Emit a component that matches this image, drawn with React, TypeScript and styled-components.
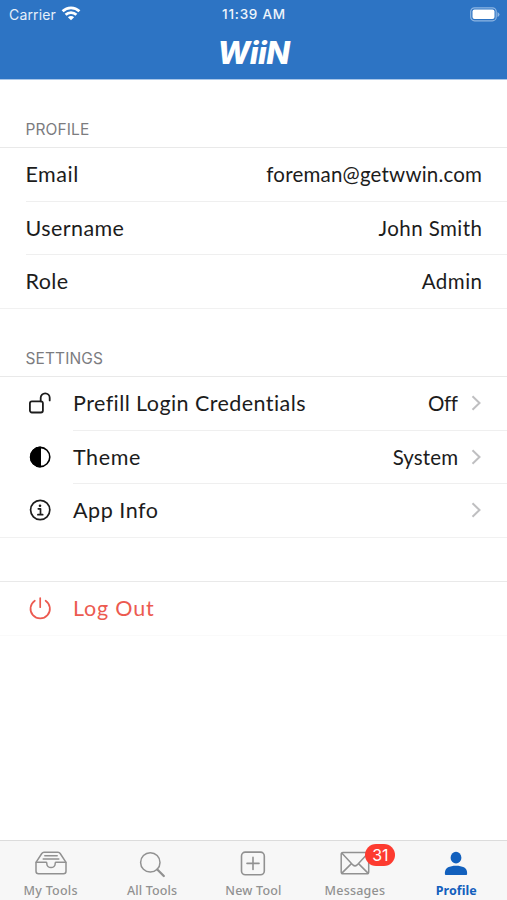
import React from "react";
import styled, { createGlobalStyle } from "styled-components";

const GlobalStyle = createGlobalStyle`
  * { box-sizing: border-box; }
  html, body { margin: 0; padding: 0; background: #fff; }
  body { overflow: hidden; }
`;

const Screen = styled.div`
  width: 507px;
  height: 900px;
  display: flex;
  flex-direction: column;
  background: #fff;
  color: #1c1c1c;
  font-family: Lato, "Open Sans", sans-serif;
  overflow: hidden;
`;

const Header = styled.header`
  flex: none;
  height: 80px;
  background: #2d74c4;
  border-bottom: 1px solid #a9c6e8;
  color: #fff;
`;

const StatusBar = styled.div`
  height: 27px;
  display: grid;
  grid-template-columns: 1fr auto 1fr;
  align-items: center;
  padding: 0 7px 0 9px;
  font: 400 14px/27px Inter, sans-serif;
`;

const Carrier = styled.div`
  display: flex;
  align-items: center;
  gap: 5px;
  letter-spacing: 0.15px;
  color: #e6effa;
`;

const Clock = styled.div`
  font-size: 13.5px;
  font-weight: 500;
  letter-spacing: 0.75px;
  margin-left: -1px;
  padding-top: 1px;
  color: #eef4fb;
`;

const Battery = styled.div`
  display: flex;
  justify-content: flex-end;
`;

const Brand = styled.div`
  height: 50px;
  display: flex;
  justify-content: center;
  font: italic 800 31px/51px Inter, sans-serif;
  letter-spacing: -0.5px;
`;

const Main = styled.main`
  flex: 1;
  min-height: 0;
`;

const SectionTitle = styled.h2<{ $height: number }>`
  margin: 0;
  padding: 40px 0 0 25.5px;
  height: ${(p) => p.$height}px;
  font: 400 15.5px/20px Inter, sans-serif;
  letter-spacing: 0.1px;
  color: #7c7c7f;
`;

const List = styled.div<{ $gap?: number; $faint?: boolean }>`
  margin-top: ${(p) => p.$gap ?? 0}px;
  border-top: 1px solid #e9e9e9;
  border-bottom: 1px solid ${(p) => (p.$faint ? "#fafafa" : "#f1f1f1")};
`;

const Row = styled.div<{ $inset: number; $danger?: boolean }>`
  height: 53.5px;
  display: flex;
  align-items: center;
  padding-right: 25px;
  padding-bottom: 1px;
  padding-left: ${(p) => p.$inset}px;
  font-size: 21.5px;
  color: ${(p) => (p.$danger ? "#ec5a50" : "#1c1c1c")};
  background: linear-gradient(#efefef, #efefef) no-repeat ${(p) => p.$inset}px 100% / 100% 1px;
  &:last-child { background: none; height: 52.5px; }
`;

const IconSlot = styled.span`
  width: 47px;
  margin-left: -47px;
  display: flex;
  svg { display: block; margin-left: 2px; }
`;

const Label = styled.span<{ $ls: number }>`
  flex: 1;
  letter-spacing: ${(p) => p.$ls}px;
`;

const Value = styled.span<{ $ls: number }>`
  font-size: 20.5px;
  letter-spacing: ${(p) => p.$ls}px;
  margin-right: ${(p) => -p.$ls}px;
`;

const ChevronIcon = styled.svg`
  margin-left: 13px;
`;

const TabBar = styled.nav`
  flex: none;
  height: 60px;
  display: grid;
  grid-template-columns: repeat(5, 1fr);
  background: #f7f7f7;
  border-top: 1px solid #dcdcdc;
`;

const Tab = styled.div<{ $active?: boolean; $ls: number }>`
  display: flex;
  flex-direction: column;
  align-items: center;
  padding-top: 7px;
  color: ${(p) => (p.$active ? "#1260bd" : "#919191")};
  font: ${(p) => (p.$active ? 700 : 500)} 12.5px/16px "Noto Sans", sans-serif;
  letter-spacing: ${(p) => p.$ls}px;
`;

const TabIcon = styled.div`
  position: relative;
  height: 35px;
  svg { display: block; }
`;

const Badge = styled.span`
  position: absolute;
  left: 26.5px;
  top: -4px;
  width: 30px;
  height: 22px;
  border-radius: 11px;
  background: #fd3b30;
  color: #fff;
  text-align: center;
  font: 400 16px/22px Inter, sans-serif;
  letter-spacing: 0;
`;

const Wifi = () => (
  <svg width="20" height="16" viewBox="0 0 20 16" fill="none" stroke="#fff" strokeWidth="2.7">
    <path d="M1.6 5.300A12 12 0 0 1 18.4 5.300" />
    <path d="M4.600 8.800A7.600 7.600 0 0 1 15.400 8.800" />
    <path d="M10 14.200 6.900 11.200A4.400 4.400 0 0 1 13.100 11.200Z" fill="#fff" stroke="none" />
  </svg>
);

const BatteryIcon = () => (
  <svg width="30" height="15" viewBox="0 0 30 15">
    <rect x="0.7" y="0.8" width="25.5" height="13" rx="3.8" fill="none" stroke="#8db5e2" strokeWidth="1.2" />
    <rect x="2.5" y="2.6" width="22" height="9.5" rx="2" fill="#fff" />
    <path d="M27.5 5v5q2-1 2-2.500t-2-2.500" fill="#8db5e2" />
  </svg>
);

const line = { fill: "none", stroke: "currentColor", strokeLinecap: "round", strokeLinejoin: "round" } as const;

const Unlock = () => (
  <svg width="24" height="24" viewBox="0 0 24 24" {...line} strokeWidth="1.8">
    <rect x="1.900" y="10.300" width="13" height="11.200" rx="2" />
    <path d="M12.700 10.300V6.800a4.500 4.500 0 0 1 9 0v2.600" />
  </svg>
);

const Contrast = () => (
  <svg width="24" height="24" viewBox="0 0 24 24" {...line} strokeWidth="1.6" color="#000">
    <circle cx="12.200" cy="12" r="9.600" />
    <path d="M12.200 2.400a9.600 9.600 0 0 0 0 19.200z" fill="currentColor" />
  </svg>
);

const Info = () => (
  <svg width="24" height="24" viewBox="0 0 24 24" {...line} strokeWidth="1.7">
    <circle cx="12.200" cy="12" r="9.600" />
    <circle cx="12" cy="7.700" r="1.300" fill="currentColor" stroke="none" />
    <path d="M10.300 10.800h2.200v5.700M9.900 16.700h4.800" />
  </svg>
);

const Power = () => (
  <svg width="24" height="24" viewBox="0 0 24 24" {...line} strokeWidth="1.7">
    <path d="M12.200 2v9.200M6.800 4.700a9.700 9.700 0 1 0 10.800 0" />
  </svg>
);

const Chevron = () => (
  <ChevronIcon width="11" height="16" viewBox="0 0 11 16" fill="none" stroke="#bfbfc1" strokeWidth="2">
    <path d="M1.500 1.300 8.500 8l-7 6.700" />
  </ChevronIcon>
);

const Tray = () => (
  <svg width="32" height="32" viewBox="0 0 32 32" {...line} strokeWidth="1.5">
    <path d="M1 14.300 6.800 5.500q.8-1.200 2.200-1.200h14q1.400 0 2.200 1.200l5.800 8.800v9q0 2.500-2.500 2.500H3.500Q1 25.800 1 23.300z" />
    <path d="M1.200 14.300h10.100c.4 0 .5.500.5 1.100a4.200 4.200 0 0 0 8.400 0c0-.6.100-1.100.5-1.100h10.100M9.800 7.800h12.400M8.200 11.100h15.600" />
  </svg>
);

const Search = () => (
  <svg width="32" height="32" viewBox="0 0 32 32" {...line} strokeWidth="1.500">
    <circle cx="14.300" cy="14.400" r="9.700" />
    <path d="m21.300 21.500 6.500 6.500" strokeWidth="2.300" />
  </svg>
);

const Plus = () => (
  <svg width="32" height="32" viewBox="0 0 32 32" {...line} strokeWidth="1.600">
    <rect x="4.500" y="4.100" width="22.800" height="22.600" rx="3.800" />
    <path d="M16 9.400v12M10 15.400h12" />
  </svg>
);

const Mail = () => (
  <svg width="32" height="32" viewBox="0 0 32 32" {...line} strokeWidth="1.500">
    <rect x="2.200" y="4.600" width="27.500" height="21.200" rx="1.800" />
    <path d="m3 5.300 10.900 11.600q2.100 2 4.200 0L29 5.300M2.900 25.100l9-9M29 25.100l-9-9" />
  </svg>
);

const Person = () => (
  <svg width="32" height="32" viewBox="0 0 32 32" fill="currentColor">
    <ellipse cx="16" cy="9.700" rx="5.400" ry="5.900" />
    <path d="M4.900 26v-1.500c0-4.800 4.800-6.800 11.100-6.800s11.100 2 11.100 6.800V26q0 .900-.9.900H5.800q-.9 0-.9-.900z" />
  </svg>
);

const profile = [
  { label: "Email", value: "foreman@getwwin.com", ls: 0.5, vls: 0.2 },
  { label: "Username", value: "John Smith", ls: 0.42, vls: 0.45 },
  { label: "Role", value: "Admin", ls: 0.4, vls: 0.5 },
];

const settings = [
  { label: "Prefill Login Credentials", value: "Off", Icon: Unlock, ls: 0.43, vls: -0.4 },
  { label: "Theme", value: "System", Icon: Contrast, ls: 0.6, vls: 0.1 },
  { label: "App Info", value: "", Icon: Info, ls: 0.55, vls: 0 },
];

const tabs = [
  { label: "My Tools", Icon: Tray, ls: 0.25 },
  { label: "All Tools", Icon: Search, ls: 0.15 },
  { label: "New Tool", Icon: Plus, ls: 0.2 },
  { label: "Messages", Icon: Mail, badge: 31, ls: 0.2 },
  { label: "Profile", Icon: Person, active: true, ls: 0.05 },
];

export default function App() {
  return (
    <Screen>
      <GlobalStyle />
      <Header>
        <StatusBar>
          <Carrier>Carrier <Wifi /></Carrier>
          <Clock>11:39 AM</Clock>
          <Battery><BatteryIcon /></Battery>
        </StatusBar>
        <Brand>WiiN</Brand>
      </Header>
      <Main>
        <SectionTitle $height={67}>PROFILE</SectionTitle>
        <List>
          {profile.map((r) => (
            <Row key={r.label} $inset={25.5}>
              <Label $ls={r.ls}>{r.label}</Label>
              <Value $ls={r.vls}>{r.value}</Value>
            </Row>
          ))}
        </List>
        <SectionTitle $height={67.5}>SETTINGS</SectionTitle>
        <List>
          {settings.map(({ Icon, ...r }) => (
            <Row key={r.label} $inset={73}>
              <IconSlot><Icon /></IconSlot>
              <Label $ls={r.ls}>{r.label}</Label>
              <Value $ls={r.vls}>{r.value}</Value>
              <Chevron />
            </Row>
          ))}
        </List>
        <List $gap={43.5} $faint>
          <Row $inset={73} $danger>
            <IconSlot><Power /></IconSlot>
            <Label $ls={0.8}>Log Out</Label>
          </Row>
        </List>
      </Main>
      <TabBar>
        {tabs.map(({ Icon, ...t }) => (
          <Tab key={t.label} $active={t.active} $ls={t.ls}>
            <TabIcon>
              <Icon />
              {t.badge && <Badge>{t.badge}</Badge>}
            </TabIcon>
            {t.label}
          </Tab>
        ))}
      </TabBar>
    </Screen>
  );
}
